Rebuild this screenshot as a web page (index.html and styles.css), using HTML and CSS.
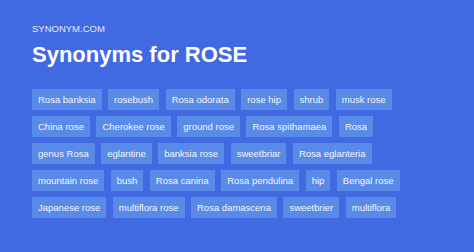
FILE: index.html
```html
<!DOCTYPE html>
<html lang="en">
<head>
  <meta charset="UTF-8" />
  <title>Synonyms for ROSE</title>
  <link rel="stylesheet" href="styles.css">
</head>
<body>
  <div class="page">
    <div class="site">SYNONYM.COM</div>
    <h1 class="title">Synonyms for ROSE</h1>
    <div class="chips">
      <span class="chip">Rosa banksia</span>
      <span class="chip">rosebush</span>
      <span class="chip">Rosa odorata</span>
      <span class="chip">rose hip</span>
      <span class="chip">shrub</span>
      <span class="chip">musk rose</span>
      <span class="chip">China rose</span>
      <span class="chip">Cherokee rose</span>
      <span class="chip">ground rose</span>
      <span class="chip">Rosa spithamaea</span>
      <span class="chip">Rosa</span>
      <span class="chip">genus Rosa</span>
      <span class="chip">eglantine</span>
      <span class="chip">banksia rose</span>
      <span class="chip">sweetbriar</span>
      <span class="chip">Rosa eglanteria</span>
      <span class="chip">mountain rose</span>
      <span class="chip">bush</span>
      <span class="chip">Rosa canina</span>
      <span class="chip">Rosa pendulina</span>
      <span class="chip">hip</span>
      <span class="chip">Bengal rose</span>
      <span class="chip">Japanese rose</span>
      <span class="chip">multiflora rose</span>
      <span class="chip">Rosa damascena</span>
      <span class="chip">sweetbrier</span>
      <span class="chip">multiflora</span>
    </div>
  </div>
</body>
</html>
```

FILE: styles.css
```css
body {
  margin: 0;
  background: #4169e1;
  font-family: "Liberation Sans", Arial, sans-serif;
  color: #fff;
}
.page {
  padding: 24px 0 0 32px;
  height: 252px;
  box-sizing: border-box;
}
.site {
  font-size: 9.5px;
  line-height: 1;
  color: #e3e9fb;
}
.title {
  margin: 10px 0 0;
  font-size: 22px;
  line-height: 1;
  font-weight: bold;
}
.chips {
  display: flex;
  flex-wrap: wrap;
  gap: 6px 6.5px;
  width: 400px;
  margin-top: 23px;
}
.chip {
  height: 21px;
  line-height: 21px;
  padding: 0 6px;
  background: #5a8ae8;
  font-size: 9.5px;
  color: #f2f5fe;
}
```
